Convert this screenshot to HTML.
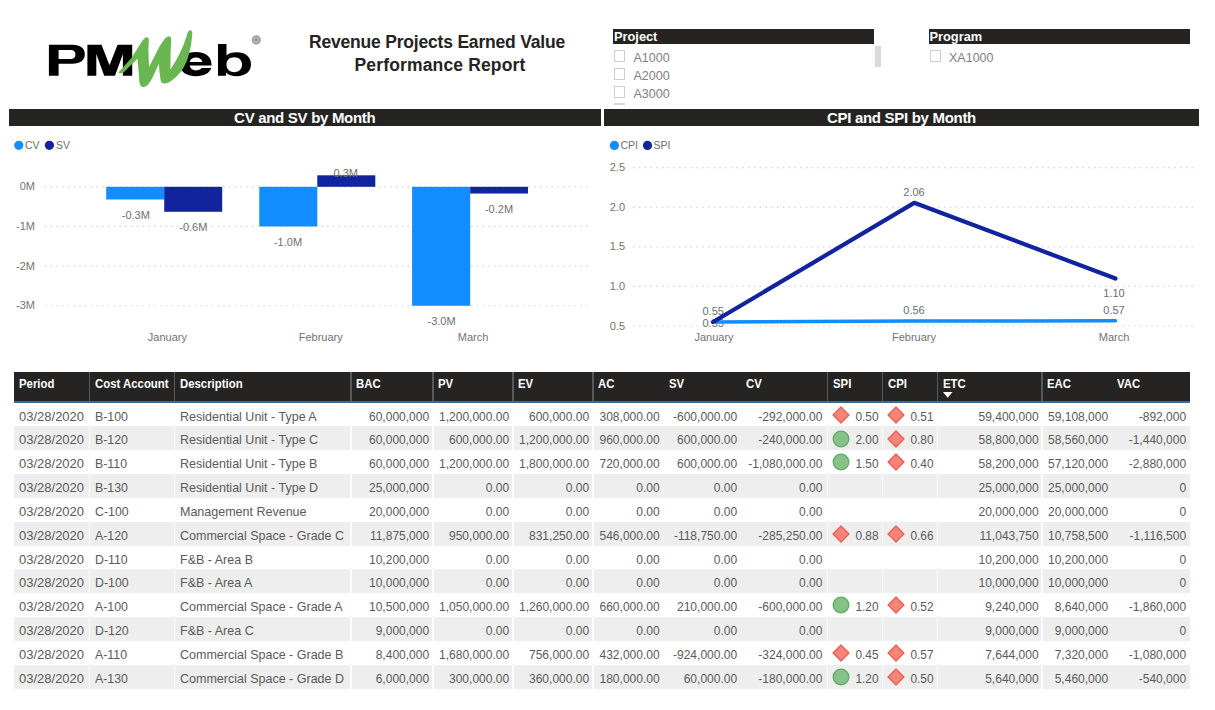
<!DOCTYPE html>
<html><head><meta charset="utf-8">
<style>
*{margin:0;padding:0;box-sizing:border-box}
html,body{width:1215px;height:710px;overflow:hidden;background:#fff}
body{position:relative;font-family:"Liberation Sans",sans-serif;}
.a{position:absolute;white-space:nowrap}
.bar{position:absolute;background:#252423}
.tt{position:absolute;color:#fff;font-weight:bold;white-space:nowrap}
.cell{position:absolute;font-size:13px;color:#5a5a5a;white-space:nowrap;line-height:16px}
.cl{transform-origin:0 50%}
.cr{transform-origin:100% 50%}
.hd{position:absolute;font-size:13px;color:#fff;font-weight:bold;white-space:nowrap;line-height:16px;transform:scaleX(0.875);transform-origin:0 50%}
.ax{position:absolute;font-size:11px;color:#737373;white-space:nowrap;line-height:12px}
.lb{position:absolute;font-size:11px;color:#6e6e6e;white-space:nowrap;line-height:12px}
.chk{position:absolute;width:11px;height:11.5px;border:1.7px solid #cdcdcd;background:#fff}
.sl{position:absolute;font-size:12.5px;color:#808080;line-height:14px}
</style></head><body>
<svg class="a" style="left:0;top:0" width="300" height="100" viewBox="0 0 300 100">
<path fill="#000" fill-rule="evenodd" d="M48.9,44.8H72.5C80.5,44.8 84.8,48.3 84.8,54.2C84.8,60.1 80.5,63.7 72.5,63.7H58.6V75.8H48.9Z M58.6,49.9H70.5C74,49.9 75.4,51.8 75.4,54.4C75.4,57 74,58.9 70.5,58.9H58.6Z"/>
<path fill="#000" d="M87.4,75.8V44.8H101.5L109.5,65.2L117.6,44.8H132.2V75.8H122.9V54L115,75.8H104.2L96.3,54V75.8Z"/>
<path fill="#000" fill-rule="evenodd" d="M196,52C206,52 211.5,57 211.5,64.5V65.6H189.6C190.1,68.6 192.5,70.4 196,70.4C199,70.4 200.6,69.4 201.5,68.1H211.2C209.5,73.5 204,76.2 196,76.2C186,76.2 180,71.5 180,64C180,56.5 186,52 196,52Z M189.6,62H202.4C201.7,59 199.3,57.4 196,57.4C192.7,57.4 190.3,59 189.6,62Z"/>
<path fill="#000" fill-rule="evenodd" d="M218,44H226.5V55.5C228.5,53.3 232,52.3 236.5,52.3C245.5,52.3 251,57 251,64.3C251,71.6 245.5,76.2 236.5,76.2C232,76.2 228.5,75 226,72.5V75.8H218Z M234.3,57.2C229.5,57.2 226.5,59.9 226.5,64.6C226.5,69.3 229.5,72.2 234.3,72.2C239,72.2 242,69.3 242,64.6C242,59.9 239,57.2 234.3,57.2Z"/>
<path fill="#6ab651" d="M118.4,72.6L132,57.2L141,42.8Q144,38 146.5,37.3Q149.2,37.3 148.8,40.5L148.4,50L149,67L159.5,46.5L164.5,39Q167,36.2 169.2,36.3Q171.6,36.8 171.2,40.2L170.6,52L170.4,69.5Q182,52 186.6,36Q188,30.2 190.3,30.3Q192.6,30.8 192.3,34.5Q191.5,45 189,54Q186.5,64 181,71.5Q176,78 170.5,81.5Q167,83.8 164,83.6Q161,83 160.6,80L159.5,72L158.9,63.8L152.5,77.5Q149.5,84 146,86.3Q143,87.8 141,86.3Q139.5,84.5 139.2,80.5L138.7,72L137.4,58.8L123.5,72.6Q120.5,74.2 118.4,72.6Z"/>
<circle cx="256.3" cy="39.9" r="3.9" fill="#b4b4b4" stroke="#9c9c9c" stroke-width="1.4"/><circle cx="256.1" cy="39.8" r="1.3" fill="#8e8e8e"/>
</svg>
<div class="a" style="left:299px;top:31px;width:276px;text-align:center;font-size:17.5px;font-weight:bold;color:#252423;line-height:23px;letter-spacing:-0.2px">Revenue Projects Earned Value<br><span style="letter-spacing:0.15px;position:relative;left:3px">Performance Report</span></div>
<div class="bar" style="left:613.3px;top:29px;width:261px;height:15px"></div><div class="tt" style="left:614px;top:30.3px;font-size:12.8px;line-height:14px">Project</div><div class="chk" style="left:614px;top:50px"></div><div class="sl" style="left:633.5px;top:51.1px">A1000</div><div class="chk" style="left:614px;top:68px"></div><div class="sl" style="left:633.5px;top:69.1px">A2000</div><div class="chk" style="left:614px;top:86px"></div><div class="sl" style="left:633.5px;top:87.1px">A3000</div><div class="a" style="left:614px;top:102.5px;width:11px;height:2px;background:#d8d8d8"></div><div class="a" style="left:874.6px;top:46.2px;width:6.7px;height:21.3px;background:#dadada"></div><div class="bar" style="left:929px;top:29px;width:260.5px;height:15px"></div><div class="tt" style="left:929.5px;top:30.3px;font-size:12.8px;line-height:14px">Program</div><div class="chk" style="left:929.5px;top:50px"></div><div class="sl" style="left:949px;top:51.1px">XA1000</div>
<div class="bar" style="left:9px;top:108.5px;width:591.5px;height:17.5px"></div><div class="tt" style="left:9px;top:108.5px;width:591.5px;text-align:center;font-size:15px;line-height:17.5px;letter-spacing:-0.3px">CV and SV by Month</div><div class="bar" style="left:604px;top:108.5px;width:595px;height:17.5px"></div><div class="tt" style="left:604px;top:108.5px;width:595px;text-align:center;font-size:15px;line-height:17.5px;letter-spacing:-0.3px">CPI and SPI by Month</div>
<svg class="a" style="left:0;top:130px" width="610" height="230" viewBox="0 130 610 230"><circle cx="18.8" cy="145.3" r="4.6" fill="#118dff"/><circle cx="49.4" cy="145.3" r="4.6" fill="#12239e"/><line x1="44.7" y1="186.8" x2="592" y2="186.8" stroke="#d4d4d4" stroke-width="1.2" stroke-dasharray="1.5 4.26"/><line x1="44.7" y1="226.45" x2="592" y2="226.45" stroke="#d4d4d4" stroke-width="1.2" stroke-dasharray="1.5 4.26"/><line x1="44.7" y1="266.1" x2="592" y2="266.1" stroke="#d4d4d4" stroke-width="1.2" stroke-dasharray="1.5 4.26"/><line x1="44.7" y1="305.75" x2="592" y2="305.75" stroke="#d4d4d4" stroke-width="1.2" stroke-dasharray="1.5 4.26"/><rect x="106.2" y="186.8" width="58" height="12.69" fill="#118dff"/><rect x="164.2" y="186.8" width="58" height="24.98" fill="#12239e"/><rect x="259.3" y="186.8" width="58" height="39.65" fill="#118dff"/><rect x="317.3" y="175.3" width="58" height="11.5" fill="#12239e"/><rect x="412.1" y="186.8" width="58.1" height="118.95" fill="#118dff"/><rect x="470.2" y="186.8" width="57.8" height="6.74" fill="#12239e"/></svg>
<div class="lb" style="left:25px;top:139px;font-size:10.5px">CV</div><div class="lb" style="left:56px;top:139px;font-size:10.5px">SV</div><div class="ax" style="left:0;width:35px;text-align:right;top:180.3px">0M</div><div class="ax" style="left:0;width:35px;text-align:right;top:219.95px">-1M</div><div class="ax" style="left:0;width:35px;text-align:right;top:259.6px">-2M</div><div class="ax" style="left:0;width:35px;text-align:right;top:299.25px">-3M</div><div class="lb" style="left:105.8px;width:60px;text-align:center;top:209.3px">-0.3M</div><div class="lb" style="left:163.3px;width:60px;text-align:center;top:220.7px">-0.6M</div><div class="lb" style="left:258px;width:60px;text-align:center;top:235.5px">-1.0M</div><div class="lb" style="left:315.7px;width:60px;text-align:center;top:166.8px">0.3M</div><div class="lb" style="left:411.6px;width:60px;text-align:center;top:315.1px">-3.0M</div><div class="lb" style="left:469px;width:60px;text-align:center;top:202.7px">-0.2M</div><div class="ax" style="left:127.4px;width:80px;text-align:center;top:331px">January</div><div class="ax" style="left:280.7px;width:80px;text-align:center;top:331px">February</div><div class="ax" style="left:433.1px;width:80px;text-align:center;top:331px">March</div>
<svg class="a" style="left:600px;top:130px" width="615" height="230" viewBox="600 130 615 230"><circle cx="614.4" cy="145.4" r="4.6" fill="#118dff"/><circle cx="647.5" cy="145.4" r="4.6" fill="#12239e"/><line x1="633" y1="326" x2="1193" y2="326" stroke="#d4d4d4" stroke-width="1.2" stroke-dasharray="1.5 4.26"/><line x1="633" y1="286.4" x2="1193" y2="286.4" stroke="#d4d4d4" stroke-width="1.2" stroke-dasharray="1.5 4.26"/><line x1="633" y1="246.8" x2="1193" y2="246.8" stroke="#d4d4d4" stroke-width="1.2" stroke-dasharray="1.5 4.26"/><line x1="633" y1="207.2" x2="1193" y2="207.2" stroke="#d4d4d4" stroke-width="1.2" stroke-dasharray="1.5 4.26"/><line x1="633" y1="167.6" x2="1193" y2="167.6" stroke="#d4d4d4" stroke-width="1.2" stroke-dasharray="1.5 4.26"/></svg>
<div class="lb" style="left:620.5px;top:139px;font-size:10.5px">CPI</div><div class="lb" style="left:653.5px;top:139px;font-size:10.5px">SPI</div><div class="ax" style="left:600px;width:25px;text-align:right;top:319.5px">0.5</div><div class="ax" style="left:600px;width:25px;text-align:right;top:279.9px">1.0</div><div class="ax" style="left:600px;width:25px;text-align:right;top:240.3px">1.5</div><div class="ax" style="left:600px;width:25px;text-align:right;top:200.7px">2.0</div><div class="ax" style="left:600px;width:25px;text-align:right;top:161.1px">2.5</div><div class="lb" style="left:693.2px;width:40px;text-align:center;top:304.8px">0.55</div><div class="lb" style="left:693.2px;width:40px;text-align:center;top:317.2px">0.55</div><div class="lb" style="left:894px;width:40px;text-align:center;top:185.5px">2.06</div><div class="lb" style="left:1094px;width:40px;text-align:center;top:286.6px">1.10</div><div class="lb" style="left:894px;width:40px;text-align:center;top:304.2px">0.56</div><div class="lb" style="left:1094px;width:40px;text-align:center;top:304.2px">0.57</div><svg class="a" style="left:600px;top:130px" width="615" height="230" viewBox="600 130 615 230"><polyline points="713,321.88 914.2,321.01 1115.5,320.77" fill="none" stroke="#118dff" stroke-width="3.5" stroke-linecap="round" stroke-linejoin="round"/><polyline points="713,322.04 914.2,202.84 1115.5,278.48" fill="none" stroke="#12239e" stroke-width="4.2" stroke-linecap="round" stroke-linejoin="round"/></svg>
<div class="ax" style="left:674px;width:80px;text-align:center;top:331px">January</div><div class="ax" style="left:874px;width:80px;text-align:center;top:331px">February</div><div class="ax" style="left:1074px;width:80px;text-align:center;top:331px">March</div>
<div class="bar" style="left:14px;top:372px;width:1176px;height:28.5px"></div><div class="a" style="left:14px;top:400.5px;width:1176px;height:2px;background:#2f6ea3"></div><div class="a" style="left:88.75px;top:372px;width:1.5px;height:28.5px;background:#5a5856"></div><div class="a" style="left:173.75px;top:372px;width:1.5px;height:28.5px;background:#5a5856"></div><div class="a" style="left:350.25px;top:372px;width:1.5px;height:28.5px;background:#5a5856"></div><div class="a" style="left:432.25px;top:372px;width:1.5px;height:28.5px;background:#5a5856"></div><div class="a" style="left:512.25px;top:372px;width:1.5px;height:28.5px;background:#5a5856"></div><div class="a" style="left:592.25px;top:372px;width:1.5px;height:28.5px;background:#5a5856"></div><div class="a" style="left:826.75px;top:372px;width:1.5px;height:28.5px;background:#5a5856"></div><div class="a" style="left:881.75px;top:372px;width:1.5px;height:28.5px;background:#5a5856"></div><div class="a" style="left:936.75px;top:372px;width:1.5px;height:28.5px;background:#5a5856"></div><div class="a" style="left:1041.25px;top:372px;width:1.5px;height:28.5px;background:#5a5856"></div><div class="hd" style="left:19px;top:376px">Period</div><div class="hd" style="left:94.5px;top:376px">Cost Account</div><div class="hd" style="left:179.5px;top:376px">Description</div><div class="hd" style="left:356px;top:376px">BAC</div><div class="hd" style="left:438px;top:376px">PV</div><div class="hd" style="left:518px;top:376px">EV</div><div class="hd" style="left:598px;top:376px">AC</div><div class="hd" style="left:668.5px;top:376px">SV</div><div class="hd" style="left:745.5px;top:376px">CV</div><div class="hd" style="left:832.5px;top:376px">SPI</div><div class="hd" style="left:887.5px;top:376px">CPI</div><div class="hd" style="left:942.5px;top:376px">ETC</div><div class="hd" style="left:1047px;top:376px">EAC</div><div class="hd" style="left:1117px;top:376px">VAC</div><svg class="a" style="left:942.5px;top:392px" width="10" height="7"><path d="M0,0H9.5L4.75,5.8Z" fill="#fff"/></svg>
<div class="cell cl" style="left:19px;top:408.6px;transform:scaleX(1.0)">03/28/2020</div><div class="cell cl" style="left:94.5px;top:408.6px;transform:scaleX(0.95)">B-100</div><div class="cell cl" style="left:179.5px;top:408.6px;transform:scaleX(0.962)">Residential Unit - Type A</div><div class="cell cr" style="left:351px;width:78.2px;text-align:right;top:408.6px;transform:scaleX(0.925)">60,000,000</div><div class="cell cr" style="left:433px;width:76.2px;text-align:right;top:408.6px;transform:scaleX(0.925)">1,200,000.00</div><div class="cell cr" style="left:513px;width:76.2px;text-align:right;top:408.6px;transform:scaleX(0.925)">600,000.00</div><div class="cell cr" style="left:593px;width:66.7px;text-align:right;top:408.6px;transform:scaleX(0.925)">308,000.00</div><div class="cell cr" style="left:663.5px;width:73.2px;text-align:right;top:408.6px;transform:scaleX(0.925)">-600,000.00</div><div class="cell cr" style="left:740.5px;width:81.5px;text-align:right;top:408.6px;transform:scaleX(0.925)">-292,000.00</div><svg class="a" style="left:831.5px;top:405.8px" width="18" height="18"><path d="M9,1L17,9L9,17L1,9Z" fill="#f4857a" stroke="#ea5d4e" stroke-width="1.2" stroke-linejoin="round"/></svg><div class="cell cr" style="left:827.5px;width:50.5px;text-align:right;top:408.6px;transform:scaleX(0.91)">0.50</div><svg class="a" style="left:886.5px;top:405.8px" width="18" height="18"><path d="M9,1L17,9L9,17L1,9Z" fill="#f4857a" stroke="#ea5d4e" stroke-width="1.2" stroke-linejoin="round"/></svg><div class="cell cr" style="left:882.5px;width:50.5px;text-align:right;top:408.6px;transform:scaleX(0.91)">0.51</div><div class="cell cr" style="left:937.5px;width:100.7px;text-align:right;top:408.6px;transform:scaleX(0.925)">59,400,000</div><div class="cell cr" style="left:1042px;width:66.2px;text-align:right;top:408.6px;transform:scaleX(0.925)">59,108,000</div><div class="cell cr" style="left:1112px;width:74.2px;text-align:right;top:408.6px;transform:scaleX(0.925)">-892,000</div>
<div class="a" style="left:14px;top:426.43px;width:1176px;height:23.83px;background:#eeeeee"></div><div class="a" style="left:88.9px;top:426.43px;width:1.2px;height:23.83px;background:#fbfbfb"></div><div class="a" style="left:173.9px;top:426.43px;width:1.2px;height:23.83px;background:#fbfbfb"></div><div class="a" style="left:350.4px;top:426.43px;width:1.2px;height:23.83px;background:#fbfbfb"></div><div class="a" style="left:432.4px;top:426.43px;width:1.2px;height:23.83px;background:#fbfbfb"></div><div class="a" style="left:512.4px;top:426.43px;width:1.2px;height:23.83px;background:#fbfbfb"></div><div class="a" style="left:592.4px;top:426.43px;width:1.2px;height:23.83px;background:#fbfbfb"></div><div class="a" style="left:826.9px;top:426.43px;width:1.2px;height:23.83px;background:#fbfbfb"></div><div class="a" style="left:881.9px;top:426.43px;width:1.2px;height:23.83px;background:#fbfbfb"></div><div class="a" style="left:936.9px;top:426.43px;width:1.2px;height:23.83px;background:#fbfbfb"></div><div class="a" style="left:1041.4px;top:426.43px;width:1.2px;height:23.83px;background:#fbfbfb"></div><div class="cell cl" style="left:19px;top:432.43px;transform:scaleX(1.0)">03/28/2020</div><div class="cell cl" style="left:94.5px;top:432.43px;transform:scaleX(0.95)">B-120</div><div class="cell cl" style="left:179.5px;top:432.43px;transform:scaleX(0.962)">Residential Unit - Type C</div><div class="cell cr" style="left:351px;width:78.2px;text-align:right;top:432.43px;transform:scaleX(0.925)">60,000,000</div><div class="cell cr" style="left:433px;width:76.2px;text-align:right;top:432.43px;transform:scaleX(0.925)">600,000.00</div><div class="cell cr" style="left:513px;width:76.2px;text-align:right;top:432.43px;transform:scaleX(0.925)">1,200,000.00</div><div class="cell cr" style="left:593px;width:66.7px;text-align:right;top:432.43px;transform:scaleX(0.925)">960,000.00</div><div class="cell cr" style="left:663.5px;width:73.2px;text-align:right;top:432.43px;transform:scaleX(0.925)">600,000.00</div><div class="cell cr" style="left:740.5px;width:81.5px;text-align:right;top:432.43px;transform:scaleX(0.925)">-240,000.00</div><svg class="a" style="left:831.5px;top:429.63px" width="18" height="18"><circle cx="9" cy="9" r="7.8" fill="#86c188" stroke="#5fab62" stroke-width="1.3"/></svg><div class="cell cr" style="left:827.5px;width:50.5px;text-align:right;top:432.43px;transform:scaleX(0.91)">2.00</div><svg class="a" style="left:886.5px;top:429.63px" width="18" height="18"><path d="M9,1L17,9L9,17L1,9Z" fill="#f4857a" stroke="#ea5d4e" stroke-width="1.2" stroke-linejoin="round"/></svg><div class="cell cr" style="left:882.5px;width:50.5px;text-align:right;top:432.43px;transform:scaleX(0.91)">0.80</div><div class="cell cr" style="left:937.5px;width:100.7px;text-align:right;top:432.43px;transform:scaleX(0.925)">58,800,000</div><div class="cell cr" style="left:1042px;width:66.2px;text-align:right;top:432.43px;transform:scaleX(0.925)">58,560,000</div><div class="cell cr" style="left:1112px;width:74.2px;text-align:right;top:432.43px;transform:scaleX(0.925)">-1,440,000</div>
<div class="cell cl" style="left:19px;top:456.26px;transform:scaleX(1.0)">03/28/2020</div><div class="cell cl" style="left:94.5px;top:456.26px;transform:scaleX(0.95)">B-110</div><div class="cell cl" style="left:179.5px;top:456.26px;transform:scaleX(0.962)">Residential Unit - Type B</div><div class="cell cr" style="left:351px;width:78.2px;text-align:right;top:456.26px;transform:scaleX(0.925)">60,000,000</div><div class="cell cr" style="left:433px;width:76.2px;text-align:right;top:456.26px;transform:scaleX(0.925)">1,200,000.00</div><div class="cell cr" style="left:513px;width:76.2px;text-align:right;top:456.26px;transform:scaleX(0.925)">1,800,000.00</div><div class="cell cr" style="left:593px;width:66.7px;text-align:right;top:456.26px;transform:scaleX(0.925)">720,000.00</div><div class="cell cr" style="left:663.5px;width:73.2px;text-align:right;top:456.26px;transform:scaleX(0.925)">600,000.00</div><div class="cell cr" style="left:740.5px;width:81.5px;text-align:right;top:456.26px;transform:scaleX(0.925)">-1,080,000.00</div><svg class="a" style="left:831.5px;top:453.46px" width="18" height="18"><circle cx="9" cy="9" r="7.8" fill="#86c188" stroke="#5fab62" stroke-width="1.3"/></svg><div class="cell cr" style="left:827.5px;width:50.5px;text-align:right;top:456.26px;transform:scaleX(0.91)">1.50</div><svg class="a" style="left:886.5px;top:453.46px" width="18" height="18"><path d="M9,1L17,9L9,17L1,9Z" fill="#f4857a" stroke="#ea5d4e" stroke-width="1.2" stroke-linejoin="round"/></svg><div class="cell cr" style="left:882.5px;width:50.5px;text-align:right;top:456.26px;transform:scaleX(0.91)">0.40</div><div class="cell cr" style="left:937.5px;width:100.7px;text-align:right;top:456.26px;transform:scaleX(0.925)">58,200,000</div><div class="cell cr" style="left:1042px;width:66.2px;text-align:right;top:456.26px;transform:scaleX(0.925)">57,120,000</div><div class="cell cr" style="left:1112px;width:74.2px;text-align:right;top:456.26px;transform:scaleX(0.925)">-2,880,000</div>
<div class="a" style="left:14px;top:474.09px;width:1176px;height:23.83px;background:#eeeeee"></div><div class="a" style="left:88.9px;top:474.09px;width:1.2px;height:23.83px;background:#fbfbfb"></div><div class="a" style="left:173.9px;top:474.09px;width:1.2px;height:23.83px;background:#fbfbfb"></div><div class="a" style="left:350.4px;top:474.09px;width:1.2px;height:23.83px;background:#fbfbfb"></div><div class="a" style="left:432.4px;top:474.09px;width:1.2px;height:23.83px;background:#fbfbfb"></div><div class="a" style="left:512.4px;top:474.09px;width:1.2px;height:23.83px;background:#fbfbfb"></div><div class="a" style="left:592.4px;top:474.09px;width:1.2px;height:23.83px;background:#fbfbfb"></div><div class="a" style="left:826.9px;top:474.09px;width:1.2px;height:23.83px;background:#fbfbfb"></div><div class="a" style="left:881.9px;top:474.09px;width:1.2px;height:23.83px;background:#fbfbfb"></div><div class="a" style="left:936.9px;top:474.09px;width:1.2px;height:23.83px;background:#fbfbfb"></div><div class="a" style="left:1041.4px;top:474.09px;width:1.2px;height:23.83px;background:#fbfbfb"></div><div class="cell cl" style="left:19px;top:480.09px;transform:scaleX(1.0)">03/28/2020</div><div class="cell cl" style="left:94.5px;top:480.09px;transform:scaleX(0.95)">B-130</div><div class="cell cl" style="left:179.5px;top:480.09px;transform:scaleX(0.962)">Residential Unit - Type D</div><div class="cell cr" style="left:351px;width:78.2px;text-align:right;top:480.09px;transform:scaleX(0.925)">25,000,000</div><div class="cell cr" style="left:433px;width:76.2px;text-align:right;top:480.09px;transform:scaleX(0.925)">0.00</div><div class="cell cr" style="left:513px;width:76.2px;text-align:right;top:480.09px;transform:scaleX(0.925)">0.00</div><div class="cell cr" style="left:593px;width:66.7px;text-align:right;top:480.09px;transform:scaleX(0.925)">0.00</div><div class="cell cr" style="left:663.5px;width:73.2px;text-align:right;top:480.09px;transform:scaleX(0.925)">0.00</div><div class="cell cr" style="left:740.5px;width:81.5px;text-align:right;top:480.09px;transform:scaleX(0.925)">0.00</div><div class="cell cr" style="left:937.5px;width:100.7px;text-align:right;top:480.09px;transform:scaleX(0.925)">25,000,000</div><div class="cell cr" style="left:1042px;width:66.2px;text-align:right;top:480.09px;transform:scaleX(0.925)">25,000,000</div><div class="cell cr" style="left:1112px;width:74.2px;text-align:right;top:480.09px;transform:scaleX(0.925)">0</div>
<div class="cell cl" style="left:19px;top:503.92px;transform:scaleX(1.0)">03/28/2020</div><div class="cell cl" style="left:94.5px;top:503.92px;transform:scaleX(0.95)">C-100</div><div class="cell cl" style="left:179.5px;top:503.92px;transform:scaleX(0.962)">Management Revenue</div><div class="cell cr" style="left:351px;width:78.2px;text-align:right;top:503.92px;transform:scaleX(0.925)">20,000,000</div><div class="cell cr" style="left:433px;width:76.2px;text-align:right;top:503.92px;transform:scaleX(0.925)">0.00</div><div class="cell cr" style="left:513px;width:76.2px;text-align:right;top:503.92px;transform:scaleX(0.925)">0.00</div><div class="cell cr" style="left:593px;width:66.7px;text-align:right;top:503.92px;transform:scaleX(0.925)">0.00</div><div class="cell cr" style="left:663.5px;width:73.2px;text-align:right;top:503.92px;transform:scaleX(0.925)">0.00</div><div class="cell cr" style="left:740.5px;width:81.5px;text-align:right;top:503.92px;transform:scaleX(0.925)">0.00</div><div class="cell cr" style="left:937.5px;width:100.7px;text-align:right;top:503.92px;transform:scaleX(0.925)">20,000,000</div><div class="cell cr" style="left:1042px;width:66.2px;text-align:right;top:503.92px;transform:scaleX(0.925)">20,000,000</div><div class="cell cr" style="left:1112px;width:74.2px;text-align:right;top:503.92px;transform:scaleX(0.925)">0</div>
<div class="a" style="left:14px;top:521.75px;width:1176px;height:23.83px;background:#eeeeee"></div><div class="a" style="left:88.9px;top:521.75px;width:1.2px;height:23.83px;background:#fbfbfb"></div><div class="a" style="left:173.9px;top:521.75px;width:1.2px;height:23.83px;background:#fbfbfb"></div><div class="a" style="left:350.4px;top:521.75px;width:1.2px;height:23.83px;background:#fbfbfb"></div><div class="a" style="left:432.4px;top:521.75px;width:1.2px;height:23.83px;background:#fbfbfb"></div><div class="a" style="left:512.4px;top:521.75px;width:1.2px;height:23.83px;background:#fbfbfb"></div><div class="a" style="left:592.4px;top:521.75px;width:1.2px;height:23.83px;background:#fbfbfb"></div><div class="a" style="left:826.9px;top:521.75px;width:1.2px;height:23.83px;background:#fbfbfb"></div><div class="a" style="left:881.9px;top:521.75px;width:1.2px;height:23.83px;background:#fbfbfb"></div><div class="a" style="left:936.9px;top:521.75px;width:1.2px;height:23.83px;background:#fbfbfb"></div><div class="a" style="left:1041.4px;top:521.75px;width:1.2px;height:23.83px;background:#fbfbfb"></div><div class="cell cl" style="left:19px;top:527.75px;transform:scaleX(1.0)">03/28/2020</div><div class="cell cl" style="left:94.5px;top:527.75px;transform:scaleX(0.95)">A-120</div><div class="cell cl" style="left:179.5px;top:527.75px;transform:scaleX(0.962)">Commercial Space - Grade C</div><div class="cell cr" style="left:351px;width:78.2px;text-align:right;top:527.75px;transform:scaleX(0.925)">11,875,000</div><div class="cell cr" style="left:433px;width:76.2px;text-align:right;top:527.75px;transform:scaleX(0.925)">950,000.00</div><div class="cell cr" style="left:513px;width:76.2px;text-align:right;top:527.75px;transform:scaleX(0.925)">831,250.00</div><div class="cell cr" style="left:593px;width:66.7px;text-align:right;top:527.75px;transform:scaleX(0.925)">546,000.00</div><div class="cell cr" style="left:663.5px;width:73.2px;text-align:right;top:527.75px;transform:scaleX(0.925)">-118,750.00</div><div class="cell cr" style="left:740.5px;width:81.5px;text-align:right;top:527.75px;transform:scaleX(0.925)">-285,250.00</div><svg class="a" style="left:831.5px;top:524.95px" width="18" height="18"><path d="M9,1L17,9L9,17L1,9Z" fill="#f4857a" stroke="#ea5d4e" stroke-width="1.2" stroke-linejoin="round"/></svg><div class="cell cr" style="left:827.5px;width:50.5px;text-align:right;top:527.75px;transform:scaleX(0.91)">0.88</div><svg class="a" style="left:886.5px;top:524.95px" width="18" height="18"><path d="M9,1L17,9L9,17L1,9Z" fill="#f4857a" stroke="#ea5d4e" stroke-width="1.2" stroke-linejoin="round"/></svg><div class="cell cr" style="left:882.5px;width:50.5px;text-align:right;top:527.75px;transform:scaleX(0.91)">0.66</div><div class="cell cr" style="left:937.5px;width:100.7px;text-align:right;top:527.75px;transform:scaleX(0.925)">11,043,750</div><div class="cell cr" style="left:1042px;width:66.2px;text-align:right;top:527.75px;transform:scaleX(0.925)">10,758,500</div><div class="cell cr" style="left:1112px;width:74.2px;text-align:right;top:527.75px;transform:scaleX(0.925)">-1,116,500</div>
<div class="cell cl" style="left:19px;top:551.58px;transform:scaleX(1.0)">03/28/2020</div><div class="cell cl" style="left:94.5px;top:551.58px;transform:scaleX(0.95)">D-110</div><div class="cell cl" style="left:179.5px;top:551.58px;transform:scaleX(0.962)">F&amp;B - Area B</div><div class="cell cr" style="left:351px;width:78.2px;text-align:right;top:551.58px;transform:scaleX(0.925)">10,200,000</div><div class="cell cr" style="left:433px;width:76.2px;text-align:right;top:551.58px;transform:scaleX(0.925)">0.00</div><div class="cell cr" style="left:513px;width:76.2px;text-align:right;top:551.58px;transform:scaleX(0.925)">0.00</div><div class="cell cr" style="left:593px;width:66.7px;text-align:right;top:551.58px;transform:scaleX(0.925)">0.00</div><div class="cell cr" style="left:663.5px;width:73.2px;text-align:right;top:551.58px;transform:scaleX(0.925)">0.00</div><div class="cell cr" style="left:740.5px;width:81.5px;text-align:right;top:551.58px;transform:scaleX(0.925)">0.00</div><div class="cell cr" style="left:937.5px;width:100.7px;text-align:right;top:551.58px;transform:scaleX(0.925)">10,200,000</div><div class="cell cr" style="left:1042px;width:66.2px;text-align:right;top:551.58px;transform:scaleX(0.925)">10,200,000</div><div class="cell cr" style="left:1112px;width:74.2px;text-align:right;top:551.58px;transform:scaleX(0.925)">0</div>
<div class="a" style="left:14px;top:569.41px;width:1176px;height:23.83px;background:#eeeeee"></div><div class="a" style="left:88.9px;top:569.41px;width:1.2px;height:23.83px;background:#fbfbfb"></div><div class="a" style="left:173.9px;top:569.41px;width:1.2px;height:23.83px;background:#fbfbfb"></div><div class="a" style="left:350.4px;top:569.41px;width:1.2px;height:23.83px;background:#fbfbfb"></div><div class="a" style="left:432.4px;top:569.41px;width:1.2px;height:23.83px;background:#fbfbfb"></div><div class="a" style="left:512.4px;top:569.41px;width:1.2px;height:23.83px;background:#fbfbfb"></div><div class="a" style="left:592.4px;top:569.41px;width:1.2px;height:23.83px;background:#fbfbfb"></div><div class="a" style="left:826.9px;top:569.41px;width:1.2px;height:23.83px;background:#fbfbfb"></div><div class="a" style="left:881.9px;top:569.41px;width:1.2px;height:23.83px;background:#fbfbfb"></div><div class="a" style="left:936.9px;top:569.41px;width:1.2px;height:23.83px;background:#fbfbfb"></div><div class="a" style="left:1041.4px;top:569.41px;width:1.2px;height:23.83px;background:#fbfbfb"></div><div class="cell cl" style="left:19px;top:575.41px;transform:scaleX(1.0)">03/28/2020</div><div class="cell cl" style="left:94.5px;top:575.41px;transform:scaleX(0.95)">D-100</div><div class="cell cl" style="left:179.5px;top:575.41px;transform:scaleX(0.962)">F&amp;B - Area A</div><div class="cell cr" style="left:351px;width:78.2px;text-align:right;top:575.41px;transform:scaleX(0.925)">10,000,000</div><div class="cell cr" style="left:433px;width:76.2px;text-align:right;top:575.41px;transform:scaleX(0.925)">0.00</div><div class="cell cr" style="left:513px;width:76.2px;text-align:right;top:575.41px;transform:scaleX(0.925)">0.00</div><div class="cell cr" style="left:593px;width:66.7px;text-align:right;top:575.41px;transform:scaleX(0.925)">0.00</div><div class="cell cr" style="left:663.5px;width:73.2px;text-align:right;top:575.41px;transform:scaleX(0.925)">0.00</div><div class="cell cr" style="left:740.5px;width:81.5px;text-align:right;top:575.41px;transform:scaleX(0.925)">0.00</div><div class="cell cr" style="left:937.5px;width:100.7px;text-align:right;top:575.41px;transform:scaleX(0.925)">10,000,000</div><div class="cell cr" style="left:1042px;width:66.2px;text-align:right;top:575.41px;transform:scaleX(0.925)">10,000,000</div><div class="cell cr" style="left:1112px;width:74.2px;text-align:right;top:575.41px;transform:scaleX(0.925)">0</div>
<div class="cell cl" style="left:19px;top:599.24px;transform:scaleX(1.0)">03/28/2020</div><div class="cell cl" style="left:94.5px;top:599.24px;transform:scaleX(0.95)">A-100</div><div class="cell cl" style="left:179.5px;top:599.24px;transform:scaleX(0.962)">Commercial Space - Grade A</div><div class="cell cr" style="left:351px;width:78.2px;text-align:right;top:599.24px;transform:scaleX(0.925)">10,500,000</div><div class="cell cr" style="left:433px;width:76.2px;text-align:right;top:599.24px;transform:scaleX(0.925)">1,050,000.00</div><div class="cell cr" style="left:513px;width:76.2px;text-align:right;top:599.24px;transform:scaleX(0.925)">1,260,000.00</div><div class="cell cr" style="left:593px;width:66.7px;text-align:right;top:599.24px;transform:scaleX(0.925)">660,000.00</div><div class="cell cr" style="left:663.5px;width:73.2px;text-align:right;top:599.24px;transform:scaleX(0.925)">210,000.00</div><div class="cell cr" style="left:740.5px;width:81.5px;text-align:right;top:599.24px;transform:scaleX(0.925)">-600,000.00</div><svg class="a" style="left:831.5px;top:596.44px" width="18" height="18"><circle cx="9" cy="9" r="7.8" fill="#86c188" stroke="#5fab62" stroke-width="1.3"/></svg><div class="cell cr" style="left:827.5px;width:50.5px;text-align:right;top:599.24px;transform:scaleX(0.91)">1.20</div><svg class="a" style="left:886.5px;top:596.44px" width="18" height="18"><path d="M9,1L17,9L9,17L1,9Z" fill="#f4857a" stroke="#ea5d4e" stroke-width="1.2" stroke-linejoin="round"/></svg><div class="cell cr" style="left:882.5px;width:50.5px;text-align:right;top:599.24px;transform:scaleX(0.91)">0.52</div><div class="cell cr" style="left:937.5px;width:100.7px;text-align:right;top:599.24px;transform:scaleX(0.925)">9,240,000</div><div class="cell cr" style="left:1042px;width:66.2px;text-align:right;top:599.24px;transform:scaleX(0.925)">8,640,000</div><div class="cell cr" style="left:1112px;width:74.2px;text-align:right;top:599.24px;transform:scaleX(0.925)">-1,860,000</div>
<div class="a" style="left:14px;top:617.07px;width:1176px;height:23.83px;background:#eeeeee"></div><div class="a" style="left:88.9px;top:617.07px;width:1.2px;height:23.83px;background:#fbfbfb"></div><div class="a" style="left:173.9px;top:617.07px;width:1.2px;height:23.83px;background:#fbfbfb"></div><div class="a" style="left:350.4px;top:617.07px;width:1.2px;height:23.83px;background:#fbfbfb"></div><div class="a" style="left:432.4px;top:617.07px;width:1.2px;height:23.83px;background:#fbfbfb"></div><div class="a" style="left:512.4px;top:617.07px;width:1.2px;height:23.83px;background:#fbfbfb"></div><div class="a" style="left:592.4px;top:617.07px;width:1.2px;height:23.83px;background:#fbfbfb"></div><div class="a" style="left:826.9px;top:617.07px;width:1.2px;height:23.83px;background:#fbfbfb"></div><div class="a" style="left:881.9px;top:617.07px;width:1.2px;height:23.83px;background:#fbfbfb"></div><div class="a" style="left:936.9px;top:617.07px;width:1.2px;height:23.83px;background:#fbfbfb"></div><div class="a" style="left:1041.4px;top:617.07px;width:1.2px;height:23.83px;background:#fbfbfb"></div><div class="cell cl" style="left:19px;top:623.07px;transform:scaleX(1.0)">03/28/2020</div><div class="cell cl" style="left:94.5px;top:623.07px;transform:scaleX(0.95)">D-120</div><div class="cell cl" style="left:179.5px;top:623.07px;transform:scaleX(0.962)">F&amp;B - Area C</div><div class="cell cr" style="left:351px;width:78.2px;text-align:right;top:623.07px;transform:scaleX(0.925)">9,000,000</div><div class="cell cr" style="left:433px;width:76.2px;text-align:right;top:623.07px;transform:scaleX(0.925)">0.00</div><div class="cell cr" style="left:513px;width:76.2px;text-align:right;top:623.07px;transform:scaleX(0.925)">0.00</div><div class="cell cr" style="left:593px;width:66.7px;text-align:right;top:623.07px;transform:scaleX(0.925)">0.00</div><div class="cell cr" style="left:663.5px;width:73.2px;text-align:right;top:623.07px;transform:scaleX(0.925)">0.00</div><div class="cell cr" style="left:740.5px;width:81.5px;text-align:right;top:623.07px;transform:scaleX(0.925)">0.00</div><div class="cell cr" style="left:937.5px;width:100.7px;text-align:right;top:623.07px;transform:scaleX(0.925)">9,000,000</div><div class="cell cr" style="left:1042px;width:66.2px;text-align:right;top:623.07px;transform:scaleX(0.925)">9,000,000</div><div class="cell cr" style="left:1112px;width:74.2px;text-align:right;top:623.07px;transform:scaleX(0.925)">0</div>
<div class="cell cl" style="left:19px;top:646.9px;transform:scaleX(1.0)">03/28/2020</div><div class="cell cl" style="left:94.5px;top:646.9px;transform:scaleX(0.95)">A-110</div><div class="cell cl" style="left:179.5px;top:646.9px;transform:scaleX(0.962)">Commercial Space - Grade B</div><div class="cell cr" style="left:351px;width:78.2px;text-align:right;top:646.9px;transform:scaleX(0.925)">8,400,000</div><div class="cell cr" style="left:433px;width:76.2px;text-align:right;top:646.9px;transform:scaleX(0.925)">1,680,000.00</div><div class="cell cr" style="left:513px;width:76.2px;text-align:right;top:646.9px;transform:scaleX(0.925)">756,000.00</div><div class="cell cr" style="left:593px;width:66.7px;text-align:right;top:646.9px;transform:scaleX(0.925)">432,000.00</div><div class="cell cr" style="left:663.5px;width:73.2px;text-align:right;top:646.9px;transform:scaleX(0.925)">-924,000.00</div><div class="cell cr" style="left:740.5px;width:81.5px;text-align:right;top:646.9px;transform:scaleX(0.925)">-324,000.00</div><svg class="a" style="left:831.5px;top:644.1px" width="18" height="18"><path d="M9,1L17,9L9,17L1,9Z" fill="#f4857a" stroke="#ea5d4e" stroke-width="1.2" stroke-linejoin="round"/></svg><div class="cell cr" style="left:827.5px;width:50.5px;text-align:right;top:646.9px;transform:scaleX(0.91)">0.45</div><svg class="a" style="left:886.5px;top:644.1px" width="18" height="18"><path d="M9,1L17,9L9,17L1,9Z" fill="#f4857a" stroke="#ea5d4e" stroke-width="1.2" stroke-linejoin="round"/></svg><div class="cell cr" style="left:882.5px;width:50.5px;text-align:right;top:646.9px;transform:scaleX(0.91)">0.57</div><div class="cell cr" style="left:937.5px;width:100.7px;text-align:right;top:646.9px;transform:scaleX(0.925)">7,644,000</div><div class="cell cr" style="left:1042px;width:66.2px;text-align:right;top:646.9px;transform:scaleX(0.925)">7,320,000</div><div class="cell cr" style="left:1112px;width:74.2px;text-align:right;top:646.9px;transform:scaleX(0.925)">-1,080,000</div>
<div class="a" style="left:14px;top:664.73px;width:1176px;height:23.83px;background:#eeeeee"></div><div class="a" style="left:88.9px;top:664.73px;width:1.2px;height:23.83px;background:#fbfbfb"></div><div class="a" style="left:173.9px;top:664.73px;width:1.2px;height:23.83px;background:#fbfbfb"></div><div class="a" style="left:350.4px;top:664.73px;width:1.2px;height:23.83px;background:#fbfbfb"></div><div class="a" style="left:432.4px;top:664.73px;width:1.2px;height:23.83px;background:#fbfbfb"></div><div class="a" style="left:512.4px;top:664.73px;width:1.2px;height:23.83px;background:#fbfbfb"></div><div class="a" style="left:592.4px;top:664.73px;width:1.2px;height:23.83px;background:#fbfbfb"></div><div class="a" style="left:826.9px;top:664.73px;width:1.2px;height:23.83px;background:#fbfbfb"></div><div class="a" style="left:881.9px;top:664.73px;width:1.2px;height:23.83px;background:#fbfbfb"></div><div class="a" style="left:936.9px;top:664.73px;width:1.2px;height:23.83px;background:#fbfbfb"></div><div class="a" style="left:1041.4px;top:664.73px;width:1.2px;height:23.83px;background:#fbfbfb"></div><div class="cell cl" style="left:19px;top:670.73px;transform:scaleX(1.0)">03/28/2020</div><div class="cell cl" style="left:94.5px;top:670.73px;transform:scaleX(0.95)">A-130</div><div class="cell cl" style="left:179.5px;top:670.73px;transform:scaleX(0.962)">Commercial Space - Grade D</div><div class="cell cr" style="left:351px;width:78.2px;text-align:right;top:670.73px;transform:scaleX(0.925)">6,000,000</div><div class="cell cr" style="left:433px;width:76.2px;text-align:right;top:670.73px;transform:scaleX(0.925)">300,000.00</div><div class="cell cr" style="left:513px;width:76.2px;text-align:right;top:670.73px;transform:scaleX(0.925)">360,000.00</div><div class="cell cr" style="left:593px;width:66.7px;text-align:right;top:670.73px;transform:scaleX(0.925)">180,000.00</div><div class="cell cr" style="left:663.5px;width:73.2px;text-align:right;top:670.73px;transform:scaleX(0.925)">60,000.00</div><div class="cell cr" style="left:740.5px;width:81.5px;text-align:right;top:670.73px;transform:scaleX(0.925)">-180,000.00</div><svg class="a" style="left:831.5px;top:667.93px" width="18" height="18"><circle cx="9" cy="9" r="7.8" fill="#86c188" stroke="#5fab62" stroke-width="1.3"/></svg><div class="cell cr" style="left:827.5px;width:50.5px;text-align:right;top:670.73px;transform:scaleX(0.91)">1.20</div><svg class="a" style="left:886.5px;top:667.93px" width="18" height="18"><path d="M9,1L17,9L9,17L1,9Z" fill="#f4857a" stroke="#ea5d4e" stroke-width="1.2" stroke-linejoin="round"/></svg><div class="cell cr" style="left:882.5px;width:50.5px;text-align:right;top:670.73px;transform:scaleX(0.91)">0.50</div><div class="cell cr" style="left:937.5px;width:100.7px;text-align:right;top:670.73px;transform:scaleX(0.925)">5,640,000</div><div class="cell cr" style="left:1042px;width:66.2px;text-align:right;top:670.73px;transform:scaleX(0.925)">5,460,000</div><div class="cell cr" style="left:1112px;width:74.2px;text-align:right;top:670.73px;transform:scaleX(0.925)">-540,000</div>
</body></html>
